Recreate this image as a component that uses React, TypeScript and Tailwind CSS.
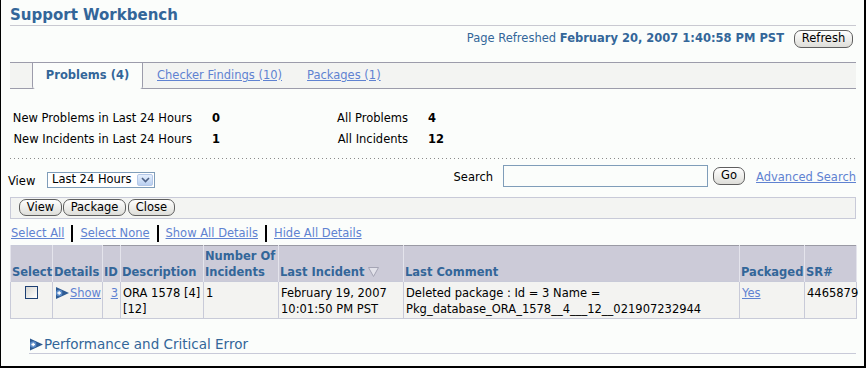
import React from "react";

const linkCls = "text-[#5f82d1] underline";

const Btn = ({ label, className }: { label: string; className: string }) => (
  <div
    className={`flex items-center justify-center rounded-[7px] border border-[#5e5e5e] bg-gradient-to-b from-white to-[#deded9] text-black leading-none ${className}`}
  >
    {label}
  </div>
);

const ExpandIcon = ({ w, h }: { w: number; h: number }) => (
  <svg width={w} height={h} viewBox="0 0 14 12" className="shrink-0">
    <polygon points="1,0 14,6 1,12" fill="#2d5a92" />
    <circle cx="4.2" cy="6" r="3.2" fill="#5b8bc9" />
    <path d="M2.4 6h3.6M4.2 4.2v3.6" stroke="#fff" strokeWidth="1.3" />
  </svg>
);

const Sep = () => <span className="mx-[7px] h-[17px] w-[2px] bg-black" />;

const StatRow = ({
  l1,
  v1,
  l2,
  v2,
}: {
  l1: string;
  v1: string;
  l2: string;
  v2: string;
}) => (
  <div className="flex h-[21px] items-center">
    <span className="w-[182px] text-right">{l1}</span>
    <span className="w-[100px] pl-[20px] font-bold">{v1}</span>
    <span className="w-[116px] text-right">{l2}</span>
    <span className="pl-[20px] font-bold">{v2}</span>
  </div>
);

const th = "border-x border-[#e4e4ec] bg-[#cccbd8] px-[1px] pb-[1px] text-left align-bottom font-bold leading-[16px] text-[#336699]";
const thSort = `${th} border-t border-t-[#9a9aa4]`;
const td = "border border-[#c8cad8] bg-[#f3f3f1] px-[2px] pt-[3px] align-top leading-[16px]";

export default function App() {
  return (
    <div className="h-[368px] w-[866px] overflow-hidden border-b-2 border-l border-r-2 border-black bg-[#fbfdfb] font-['DejaVu_Sans',sans-serif] text-[11.5px] text-black">
      <div className="pl-[9px] pr-[8px]">
        {/* title */}
        <div className="h-[26px] border-b border-[#c9c9d1] pt-[6px]">
          <h1 className="text-[15px] font-bold leading-[18px] text-[#336699]">Support Workbench</h1>
        </div>

        {/* refresh */}
        <div className="mt-[4px] flex h-[18px] items-center justify-end pr-[3px]">
          <span className="text-[#336699]">
            Page Refreshed <b>February 20, 2007 1:40:58 PM PST</b>
          </span>
          <Btn label="Refresh" className="ml-[10px] h-[18px] w-[59px]" />
        </div>

        {/* tabs */}
        <div className="mt-[14px] flex h-[27px] items-stretch border-y border-[#9c9cab] bg-[#f3f4f2]">
          <div className="w-[22px]" />
          <div className="-mb-px flex w-[111px] items-center justify-center rounded-b-[3px] border-x border-[#9c9cab] bg-[#fbfdfb] font-bold text-[#336699]">
            Problems (4)
          </div>
          <div className="flex items-center">
            <span className={`ml-[14px] ${linkCls}`}>Checker Findings (10)</span>
            <span className={`ml-[25px] ${linkCls}`}>Packages (1)</span>
          </div>
        </div>

        {/* stats */}
        <div className="mt-[19px]">
          <StatRow l1="New Problems in Last 24 Hours" v1="0" l2="All Problems" v2="4" />
          <StatRow l1="New Incidents in Last 24 Hours" v1="1" l2="All Incidents" v2="12" />
        </div>

        <div className="mt-[8px] h-px bg-[linear-gradient(to_right,#8a8a8a_1px,transparent_1px)] bg-[length:4px_1px]" />

        {/* view / search */}
        <div className="mt-[6px] flex h-[24px] items-start">
          <span className="-ml-[2px] mt-[8px] w-[39px] leading-[16px]">View</span>
          <div className="mt-[7px] flex h-[16px] w-[108px] items-center justify-between border border-[#7f9db9] bg-white pl-[4px] pr-[1px]">
            <span className="leading-none">Last 24 Hours</span>
            <div className="flex h-[12px] w-[16px] items-center justify-center rounded-[2px] border border-[#b4c8e8] bg-gradient-to-b from-[#e6f0fd] to-[#b9cff0]">
              <svg width="9" height="6" viewBox="0 0 9 6">
                <path d="M1 1l3.5 3.5L8 1" stroke="#4d6185" strokeWidth="1.6" fill="none" />
              </svg>
            </div>
          </div>
          <div className="flex-1" />
          <span className="mr-[10px] mt-[4px] leading-[16px]">Search</span>
          <div className="h-[22px] w-[205px] border border-[#7f9db9] bg-[#fbfdfb]" />
          <Btn label="Go" className="ml-[5px] mt-[2px] h-[18px] w-[32px]" />
          <span className={`ml-[11px] mt-[4px] leading-[16px] ${linkCls}`}>Advanced Search</span>
        </div>

        {/* toolbar */}
        <div className="mt-[8px] flex h-[22px] items-start gap-[1px] border border-[#c8cad8] bg-[#f3f4f2] pl-[8px] pt-px">
          <Btn label="View" className="h-[17px] w-[43px]" />
          <Btn label="Package" className="h-[17px] w-[63px]" />
          <Btn label="Close" className="ml-px h-[17px] w-[47px]" />
        </div>

        {/* select links */}
        <div className="flex h-[26px] items-center pl-[1px] pt-[3px]">
          <span className={linkCls}>Select All</span>
          <Sep />
          <span className={linkCls}>Select None</span>
          <Sep />
          <span className={linkCls}>Show All Details</span>
          <Sep />
          <span className={linkCls}>Hide All Details</span>
        </div>

        {/* table */}
        <table className="w-[846px] table-fixed border-collapse border border-[#c8cad8]">
          <colgroup>
            <col className="w-[42px]" />
            <col className="w-[50px]" />
            <col className="w-[18px]" />
            <col className="w-[83px]" />
            <col className="w-[75px]" />
            <col className="w-[125px]" />
            <col className="w-[336px]" />
            <col className="w-[65px]" />
            <col className="w-[52px]" />
          </colgroup>
          <thead>
            <tr className="h-[36px]">
              <th className={th}>Select</th>
              <th className={th}>Details</th>
              <th className={`${thSort} border-l-[#9a9aa4]`}>ID</th>
              <th className={thSort}>Description</th>
              <th className={thSort}>Number Of Incidents</th>
              <th className={thSort}>
                <span className="inline-flex items-center gap-[4px]">
                  Last Incident
                  <svg width="11" height="10" viewBox="0 0 11 10">
                    <polygon points="0.5,0.5 10.5,0.5 5.5,9.5" fill="#e2e2ea" stroke="#a4a4b4" />
                  </svg>
                </span>
              </th>
              <th className={thSort}>Last Comment</th>
              <th className={`${thSort} whitespace-nowrap`}>Packaged</th>
              <th className={thSort}>SR#</th>
            </tr>
          </thead>
          <tbody>
            <tr className="h-[37px]">
              <td className={`${td} text-center`}>
                <div className="mx-auto mt-px h-[13px] w-[13px] border border-[#1c3f73] bg-gradient-to-br from-[#d6d6d2] to-white" />
              </td>
              <td className={td}>
                <span className="flex items-center gap-[1px]">
                  <ExpandIcon w={14} h={12} />
                  <span className={linkCls}>Show</span>
                </span>
              </td>
              <td className={`${td} text-right`}>
                <span className={linkCls}>3</span>
              </td>
              <td className={td}>ORA 1578 [4] [12]</td>
              <td className={td}>1</td>
              <td className={td}>February 19, 2007 10:01:50 PM PST</td>
              <td className={`${td} break-all`}>
                Deleted package : Id = 3 Name =<br />
                Pkg_database_ORA_1578__4___12__021907232944
              </td>
              <td className={td}>
                <span className={linkCls}>Yes</span>
              </td>
              <td className={`${td} px-[1px]`}>4465879</td>
            </tr>
          </tbody>
        </table>

        {/* section */}
        <div className="ml-[19px] mt-[16px] flex h-[19px] items-center gap-[1px] border-b border-[#c8cad8]">
          <ExpandIcon w={14} h={13} />
          <span className="text-[13.5px] leading-[16px] text-[#336699]">Performance and Critical Error</span>
        </div>
      </div>
    </div>
  );
}
